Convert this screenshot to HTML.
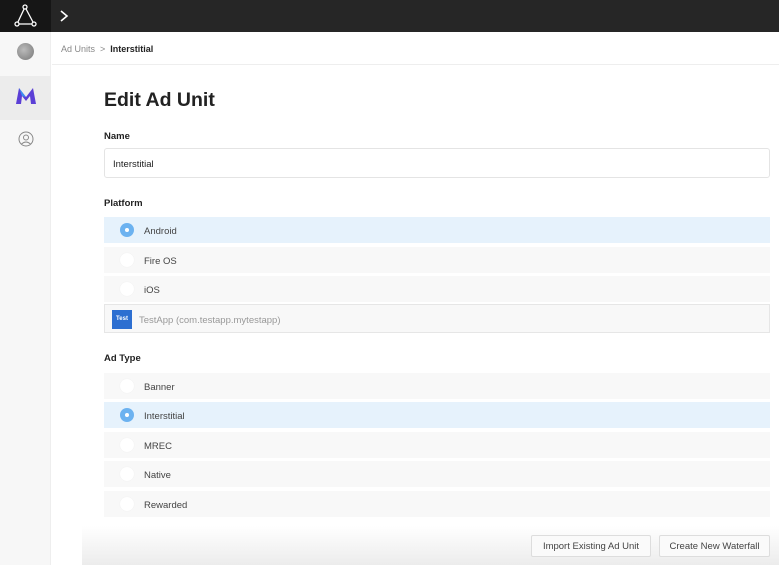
<!DOCTYPE html>
<html><head><style>
*{box-sizing:border-box;margin:0;padding:0}
body{width:779px;height:565px;overflow:hidden;background:#fff;font-family:"Liberation Sans",sans-serif;color:#222;position:relative}
.top{position:absolute;left:0;top:0;width:779px;height:32px;background:#262626}
.logo{position:absolute;left:0;top:0;width:51px;height:32px;background:#161616}
.side{position:absolute;left:0;top:32px;width:51px;height:533px;background:#f7f7f7;border-right:1px solid #eee}
.sel{position:absolute;left:0;top:76px;width:51px;height:44px;background:#ececec}
.crumb{position:absolute;left:52px;top:32px;width:727px;height:33px;border-bottom:1px solid #eee;font-size:9px;padding:12px 0 0 9px;color:#888}
.crumb b{color:#222;font-weight:bold}
h1{position:absolute;left:104px;top:89px;font-size:19.5px;font-weight:bold}
.lbl{position:absolute;left:104px;font-size:9.5px;font-weight:bold}
.inp{position:absolute;left:104px;top:148px;width:666px;height:30px;border:1px solid #e4e4e4;border-radius:3px;font-size:9.5px;padding:10px 0 0 8px}
.row{position:absolute;left:104px;width:666px;height:26px;background:#f8f8f8;font-size:9.5px;padding:9px 0 0 40px;color:#444}
.row.on{background:#e6f2fc}
.rad{position:absolute;left:16px;top:6px;width:14px;height:14px;border-radius:50%;background:#fff;box-shadow:0 0 1px rgba(0,0,0,.08)}
.on .rad{background:#6cb2f0;box-shadow:none}
.on .rad:after{content:"";position:absolute;left:5px;top:5px;width:4px;height:4px;border-radius:50%;background:#fff}
.app{position:absolute;left:104px;top:304px;width:666px;height:29px;border:1px solid #e6e6e6;background:#f8f8f8;font-size:9.5px;color:#999;padding:10px 0 0 34px}
.app i{position:absolute;left:7px;top:5px;width:20px;height:19px;background:#2d6fd1;color:#fff;font-style:normal;font-size:6px;font-weight:bold;text-align:center;line-height:19px}
.foot{position:absolute;left:82px;top:526px;width:697px;height:39px;background:linear-gradient(#fff,#ececec)}
.btn{position:absolute;top:535px;height:22px;border:1px solid #ddd;background:#fafafa;border-radius:2px;font-size:9.5px;color:#444;text-align:center;line-height:21px}
</style></head><body>
<div class="top"></div>
<div class="logo"><svg width="51" height="32"><g fill="none" stroke="#fff" stroke-width="1.3"><path d="M25 7 L17 24 M25 7 L34 24 M17 24 L34 24"/><circle cx="25" cy="7" r="2" fill="#161616"/><circle cx="17" cy="24" r="2" fill="#161616"/><circle cx="34" cy="24" r="2" fill="#161616"/></g></svg></div>
<svg style="position:absolute;left:58px;top:9px" width="12" height="14"><path d="M3 2 L9 7 L3 12" fill="none" stroke="#fff" stroke-width="1.6"/></svg>
<div class="side"></div>
<div class="sel"></div>
<div style="position:absolute;left:17px;top:43px;width:17px;height:17px;border-radius:50%;background:radial-gradient(circle at 40% 40%,#bbb,#777)"></div>
<svg style="position:absolute;left:15px;top:87px" width="22" height="18"><path d="M1 17 L4 1 L11 10 L18 1 L21 17 L16 17 L15 9 L11 14 L7 9 L6 17Z" fill="#5b3fd6"/><path d="M4 1 L11 10 L7 9Z" fill="#3b8ff0"/></svg>
<svg style="position:absolute;left:18px;top:131px" width="16" height="16"><g fill="none" stroke="#888" stroke-width="1"><circle cx="8" cy="8" r="7"/><circle cx="8" cy="6.5" r="2.5"/><path d="M3.5 13 Q8 9 12.5 13"/></g></svg>
<div class="crumb">Ad Units &nbsp;&gt;&nbsp; <b>Interstitial</b></div>
<h1>Edit Ad Unit</h1>
<div class="lbl" style="top:131px">Name</div>
<div class="inp">Interstitial</div>
<div class="lbl" style="top:198px">Platform</div>
<div class="row on" style="top:217px"><span class="rad"></span>Android</div>
<div class="row" style="top:247px"><span class="rad"></span>Fire OS</div>
<div class="row" style="top:276px"><span class="rad"></span>iOS</div>
<div class="app"><i>Test</i>TestApp (com.testapp.mytestapp)</div>
<div class="lbl" style="top:353px">Ad Type</div>
<div class="row" style="top:373px"><span class="rad"></span>Banner</div>
<div class="row on" style="top:402px"><span class="rad"></span>Interstitial</div>
<div class="row" style="top:432px"><span class="rad"></span>MREC</div>
<div class="row" style="top:461px"><span class="rad"></span>Native</div>
<div class="row" style="top:491px"><span class="rad"></span>Rewarded</div>
<div class="foot"></div>
<div class="btn" style="left:531px;width:120px">Import Existing Ad Unit</div>
<div class="btn" style="left:659px;width:111px">Create New Waterfall</div>
</body></html>
